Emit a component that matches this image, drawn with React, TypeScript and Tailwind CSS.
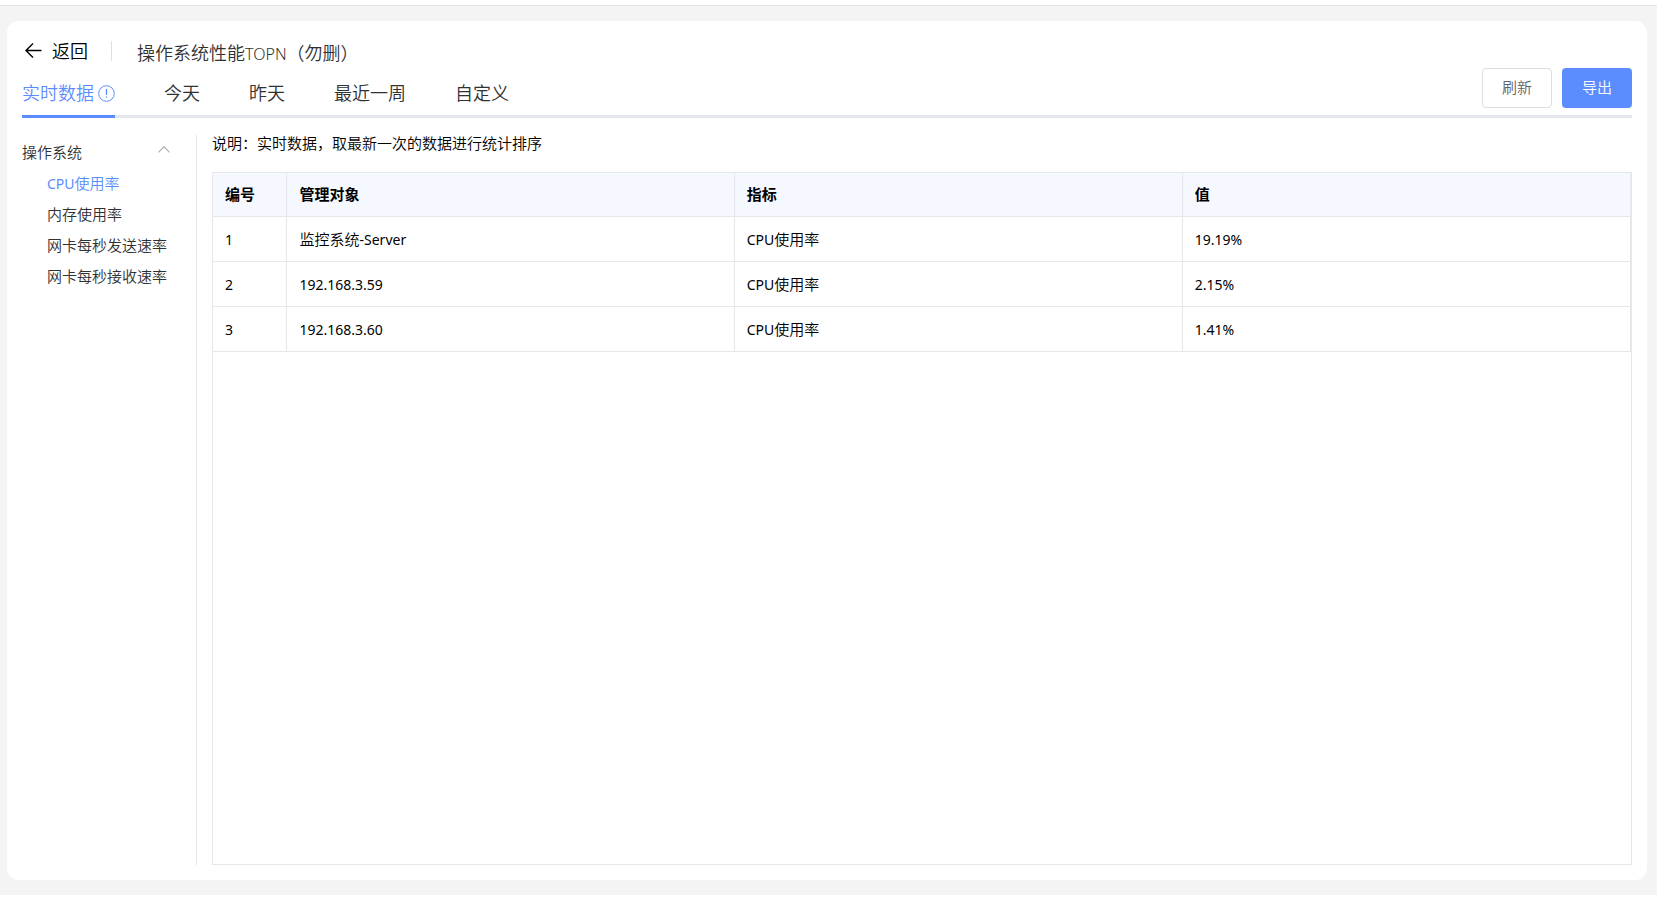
import React, { useState } from 'react';

interface Row {
  id: number;
  target: string;
  latin?: string;
  value: string;
}

const tabs = ['实时数据', '今天', '昨天', '最近一周', '自定义'];

const rows: Row[] = [
  { id: 1, target: '监控系统', latin: '-Server', value: '19.19%' },
  { id: 2, target: '', latin: '192.168.3.59', value: '2.15%' },
  { id: 3, target: '', latin: '192.168.3.60', value: '1.41%' },
];

const metrics = ['CPU使用率', '内存使用率', '网卡每秒发送速率', '网卡每秒接收速率'];

const BackIcon = () => (
  <svg width="17" height="16" viewBox="0 0 17 16" fill="none" stroke="currentColor" strokeWidth="1.4">
    <path d="M16.5 7.5H1M8 0.5L1 7.5l7 7" />
  </svg>
);

const InfoIcon = () => (
  <svg width="17" height="17" viewBox="0 0 17 17" fill="none" stroke="currentColor">
    <circle cx="8.5" cy="8.5" r="7.8" />
    <path d="M8.5 4v6" strokeWidth="1.3" />
    <path d="M8.5 11.4v1.4" strokeWidth="1.3" />
  </svg>
);

const ChevronUp = () => (
  <svg width="12" height="7" viewBox="0 0 12 7" fill="none" stroke="#a8abb2" strokeWidth="1.1">
    <path d="M0.5 6.3L6 0.8l5.5 5.5" />
  </svg>
);

// Latin runs are set one size smaller so they sit evenly beside the Chinese text
const MetricName = ({ name }: { name: string }) =>
  name.startsWith('CPU') ? (
    <>
      <span className="text-[14px] font-normal">CPU</span>
      {name.slice(3)}
    </>
  ) : (
    <>{name}</>
  );

const Header = () => {
  const [active, setActive] = useState(tabs[0]);

  return (
    <header className="flex items-end justify-between border-b-3 border-[#e4e7ed]">
      <div className="-mb-[3px]">
        <div className="flex h-[30px] items-center">
          <button className="flex items-center gap-2.5 pl-[3px] text-[18px] leading-6 text-black">
            <BackIcon />
            返回
          </button>
          <div className="ml-[23px] h-5 w-px bg-[#dcdfe6]" />
          <h1 className="ml-[25px] pt-1 text-[18px] leading-6 text-[#303133]">
            操作系统性能<span className="text-[16px]">TOPN</span>（勿删）
          </h1>
        </div>
        <nav className="flex gap-[49px]">
          {tabs.map((tab) => (
            <button
              key={tab}
              onClick={() => setActive(tab)}
              className={
                tab === active
                  ? 'flex h-[52px] items-center gap-1 border-b-3 border-[#5c8dff] pt-1.5 text-[18px] text-[#5c8dff]'
                  : 'flex h-[52px] items-center border-b-3 border-transparent pt-1.5 text-[18px] text-[#303133]'
              }
            >
              {tab}
              {tab === tabs[0] && <InfoIcon />}
            </button>
          ))}
        </nav>
      </div>
      <div className="mb-[7px] flex gap-2.5">
        <button className="h-10 w-[70px] rounded border border-[#dcdfe6] bg-white pb-0.5 text-[15px] text-[#606266]">刷新</button>
        <button className="h-10 w-[70px] rounded bg-[#5c8dff] pb-0.5 text-[15px] text-white">导出</button>
      </div>
    </header>
  );
};

const Sidebar = () => {
  const [open, setOpen] = useState(true);
  const [current, setCurrent] = useState(metrics[0]);

  return (
    <aside className="w-[175px] shrink-0 border-r border-[#e4e4e6] pt-0.5 text-[15px] text-[#303133]">
      <button onClick={() => setOpen(!open)} className="flex h-[31px] w-full items-center justify-between pr-[26px]">
        操作系统
        <span className="pb-1.5">
          <ChevronUp />
        </span>
      </button>
      {open && (
        <ul>
          {metrics.map((name) => (
            <li key={name}>
              <button
                onClick={() => setCurrent(name)}
                className={
                  name === current
                    ? 'block h-[31px] pl-[25px] text-left text-[#5c8dff]'
                    : 'block h-[31px] pl-[25px] text-left'
                }
              >
                <MetricName name={name} />
              </button>
            </li>
          ))}
        </ul>
      )}
    </aside>
  );
};

const TopTable = () => (
  <div className="flex-1 border border-[#e6e7ea]">
    <table className="w-full table-fixed text-left text-[15px] text-black">
      <thead>
        <tr className="h-[43px] border-b border-[#e6e7ea] bg-[#f5f9ff]">
          <th className="w-[73px] border-r border-[#e6e7ea] px-3 font-bold">编号</th>
          <th className="border-r border-[#e6e7ea] px-[13px] font-bold">管理对象</th>
          <th className="border-r border-[#e6e7ea] px-3 font-bold">指标</th>
          <th className="border-r border-[#e6e7ea] px-3 font-bold">值</th>
        </tr>
      </thead>
      <tbody>
        {rows.map((row) => (
          <tr key={row.id} className="h-[45px] border-b border-[#e6e7ea]">
            <td className="border-r border-[#e6e7ea] px-3 pt-0.5 text-[14px] font-normal">{row.id}</td>
            <td className="border-r border-[#e6e7ea] px-[13px] pt-0.5">
              {row.target}
              <span className="text-[14px] font-normal">{row.latin}</span>
            </td>
            <td className="border-r border-[#e6e7ea] px-3 pt-0.5">
              <MetricName name="CPU使用率" />
            </td>
            <td className="border-r border-[#e6e7ea] px-3 pt-0.5 text-[14px] font-normal">{row.value}</td>
          </tr>
        ))}
      </tbody>
    </table>
  </div>
);

export default function App() {
  return (
    <div className="flex min-h-screen flex-col bg-white pb-[7px] font-['Noto_Sans','Noto_Sans_CJK_SC',sans-serif] font-[350]">
      <div className="h-1.5 border-b border-[#e2e2e4]" />
      <div className="flex flex-1 flex-col bg-[#f4f4f4] pt-[15px] pr-2.5 pb-[15px] pl-[7px]">
        <main className="flex flex-1 flex-col rounded-xl bg-white p-[15px]">
          <Header />
          <div className="flex flex-1 pt-[17px]">
            <Sidebar />
            <section className="flex flex-1 flex-col pl-[15px]">
              <p className="pb-[21px] text-[15px] leading-4 text-black">
                说明：实时数据，取最新一次的数据进行统计排序
              </p>
              <TopTable />
            </section>
          </div>
        </main>
      </div>
    </div>
  );
}
